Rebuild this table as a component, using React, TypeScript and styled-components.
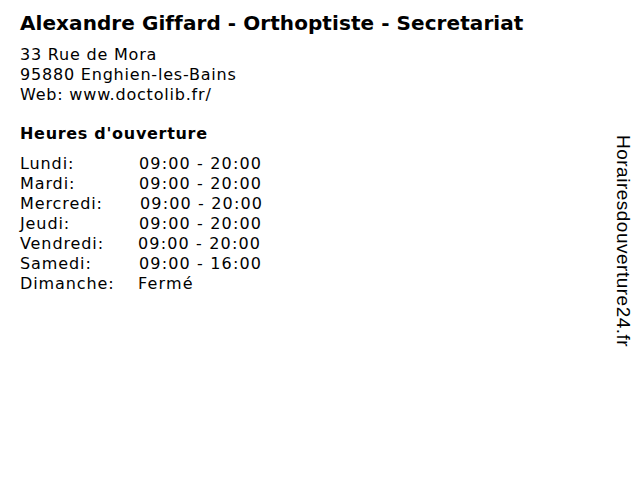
import React from "react";
import styled, { createGlobalStyle } from "styled-components";

const Global = createGlobalStyle`
  html, body { margin: 0; padding: 0; background: #fff; }
  body { width: 640px; height: 480px; overflow: hidden; font-family: "DejaVu Sans", Verdana, sans-serif; color: #000; }
`;

const Page = styled.div`
  position: relative;
  width: 640px;
  height: 480px;
  display: flex;
  flex-direction: column;
  padding: 11px 20px 0 20px;
  box-sizing: border-box;
`;

const Title = styled.h1`
  margin: 0;
  font-size: 20px;
  font-weight: bold;
  line-height: 24px;
  letter-spacing: 0.07px;
  white-space: nowrap;
`;

const Address = styled.div`
  margin-top: 10px;
  font-size: 16px;
  line-height: 20px;
  letter-spacing: 0.8px;
`;

const Heading = styled.h2`
  margin: 19px 0 0 0;
  font-size: 16px;
  font-weight: bold;
  line-height: 20px;
  letter-spacing: 0.7px;
`;

const Hours = styled.div`
  margin-top: 10px;
  display: grid;
  grid-template-columns: 118px auto;
  font-size: 16px;
  line-height: 20px;
  letter-spacing: 0.9px;
`;

const Day = styled.span``;

const Time = styled.span<{ $shift: number }>`
  padding-left: ${(p) => p.$shift}px;
  letter-spacing: 1.15px;
`;

const Side = styled.div`
  position: absolute;
  left: 613px;
  top: 135px;
  writing-mode: vertical-rl;
  font-family: "Liberation Sans", Arial, sans-serif;
  font-size: 19px;
  line-height: 20px;
  letter-spacing: 0.5px;
  color: #000;
`;

const rows: [string, string, number][] = [
  ["Lundi:", "09:00 - 20:00", 1],
  ["Mardi:", "09:00 - 20:00", 1],
  ["Mercredi:", "09:00 - 20:00", 2],
  ["Jeudi:", "09:00 - 20:00", 1],
  ["Vendredi:", "09:00 - 20:00", 0],
  ["Samedi:", "09:00 - 16:00", 1],
  ["Dimanche:", "Fermé", 0],
];

export default function App() {
  return (
    <>
      <Global />
      <Page>
        <Title>Alexandre Giffard - Orthoptiste - Secretariat</Title>
        <Address>
          33 Rue de Mora
          <br />
          95880 Enghien-les-Bains
          <br />
          Web: www.doctolib.fr/
        </Address>
        <Heading>Heures d'ouverture</Heading>
        <Hours>
          {rows.map(([d, t, s]) => (
            <React.Fragment key={d}>
              <Day>{d}</Day>
              <Time $shift={s}>{t}</Time>
            </React.Fragment>
          ))}
        </Hours>
        <Side>Horairesdouverture24.fr</Side>
      </Page>
    </>
  );
}
